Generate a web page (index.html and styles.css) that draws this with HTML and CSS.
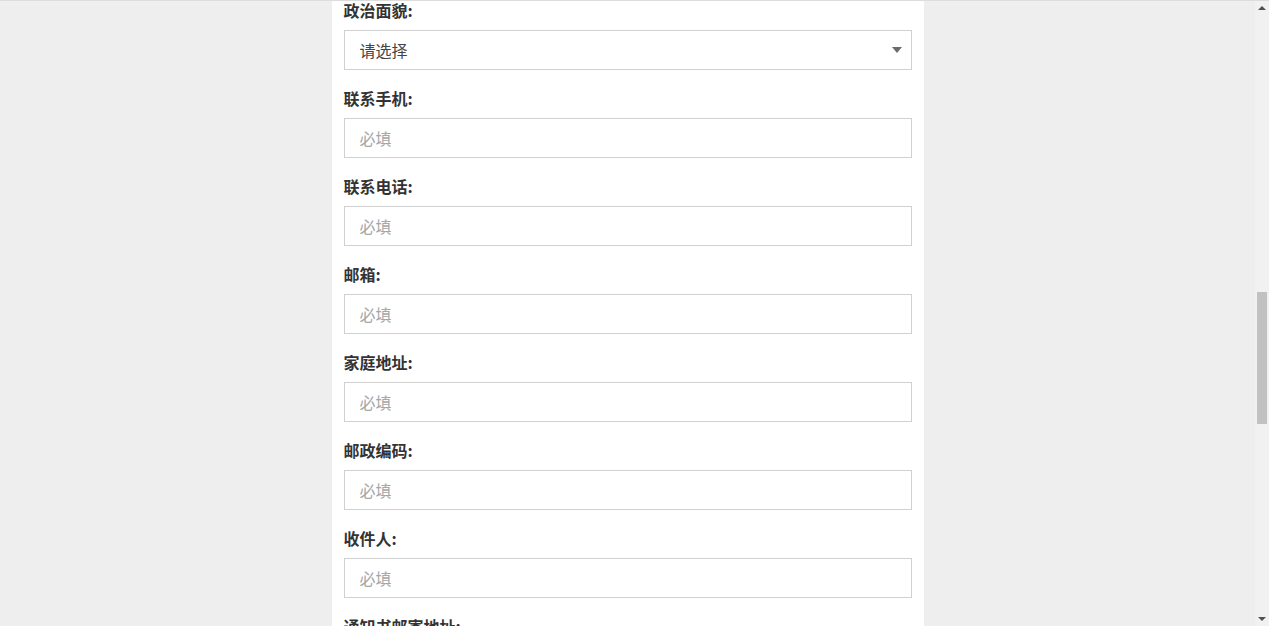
FILE: index.html
```html
<!DOCTYPE html>
<html lang="zh-CN">
<head>
    <meta charset="UTF-8">
    <meta name="viewport" content="width=device-width, initial-scale=1.0">
    <title>报名信息</title>
    <link rel="stylesheet" href="styles.css">
</head>
<body>

<div class="page">
    <div class="main">
        <div class="panel">
            <form class="info-form" onsubmit="return false;">
                <div class="field">
                    <label>政治面貌:</label>
                    <div class="select-box">
                        <select>
                            <option>请选择</option>
                            <option>中共党员</option>
                            <option>共青团员</option>
                            <option>群众</option>
                        </select>
                    </div>
                </div>
                <div class="field">
                    <label>联系手机:</label>
                    <input type="text" placeholder="必填">
                </div>
                <div class="field">
                    <label>联系电话:</label>
                    <input type="text" placeholder="必填">
                </div>
                <div class="field">
                    <label>邮箱:</label>
                    <input type="text" placeholder="必填">
                </div>
                <div class="field">
                    <label>家庭地址:</label>
                    <input type="text" placeholder="必填">
                </div>
                <div class="field">
                    <label>邮政编码:</label>
                    <input type="text" placeholder="必填">
                </div>
                <div class="field">
                    <label>收件人:</label>
                    <input type="text" placeholder="必填">
                </div>
                <div class="field">
                    <label>通知书邮寄地址:</label>
                    <input type="text" placeholder="必填">
                </div>
            </form>
        </div>
    </div>

    <!-- 右侧滚动条 -->
    <div class="scrollbar">
        <div class="arrow arrow-up"></div>
        <div class="track">
            <div class="thumb"></div>
        </div>
        <div class="arrow arrow-down"></div>
    </div>
</div>

</body>
</html>
```

FILE: styles.css
```css
html, body {
    margin: 0;
    height: 100%;
}

body {
    background-color: #eeeeee;
    font-family: "Noto Sans CJK SC", "Liberation Sans", sans-serif;
    color: #333;
    overflow: hidden;
}

.page {
    display: flex;
    height: 100vh;
    border-top: 1px solid #dcdcdc;
    box-sizing: border-box;
}

.main {
    flex: 1;
    overflow: hidden;
}

/* 白色表单区域 */
.panel {
    width: 592px;
    margin: 0 auto;
    min-height: 100%;
    background-color: #fff;
    padding: 0 12px;
    box-sizing: border-box;
}

.info-form {
    margin-top: -1px;
}

.field {
    margin-bottom: 18px;
}

.field label {
    display: block;
    height: 22px;
    line-height: 20px;
    margin-bottom: 8px;
    font-size: 16px;
    font-weight: bold;
    color: #333;
}

.field input,
.select-box select {
    display: block;
    width: 100%;
    height: 40px;
    padding: 0 15px;
    border: 1px solid #d0d0d0;
    border-radius: 0;
    background-color: #fff;
    font-family: "Noto Sans CJK SC", "Liberation Sans", sans-serif;
    font-size: 16px;
    color: #555;
    box-sizing: border-box;
    outline: none;
}

.field input::placeholder {
    color: #a6a6a6;
}

.select-box {
    position: relative;
}

.select-box select {
    -webkit-appearance: none;
    appearance: none;
    color: #444;
}

/* 下拉三角 */
.select-box::after {
    content: "";
    position: absolute;
    right: 10px;
    top: 17px;
    border-left: 5px solid transparent;
    border-right: 5px solid transparent;
    border-top: 6px solid #6b6b6b;
    pointer-events: none;
}

/* 模拟浏览器滚动条 */
.scrollbar {
    width: 14px;
    display: flex;
    flex-direction: column;
    background-color: #f1f1f1;
}

.arrow {
    height: 14px;
    display: flex;
    align-items: center;
    justify-content: center;
}

.arrow::before {
    content: "";
    border-left: 4px solid transparent;
    border-right: 4px solid transparent;
}

.arrow-up::before {
    border-bottom: 4px solid #505050;
}

.arrow-down::before {
    border-top: 4px solid #505050;
}

.track {
    flex: 1;
    padding: 277px 2px 0;
}

.thumb {
    height: 132px;
    background-color: #c1c1c1;
}
```
